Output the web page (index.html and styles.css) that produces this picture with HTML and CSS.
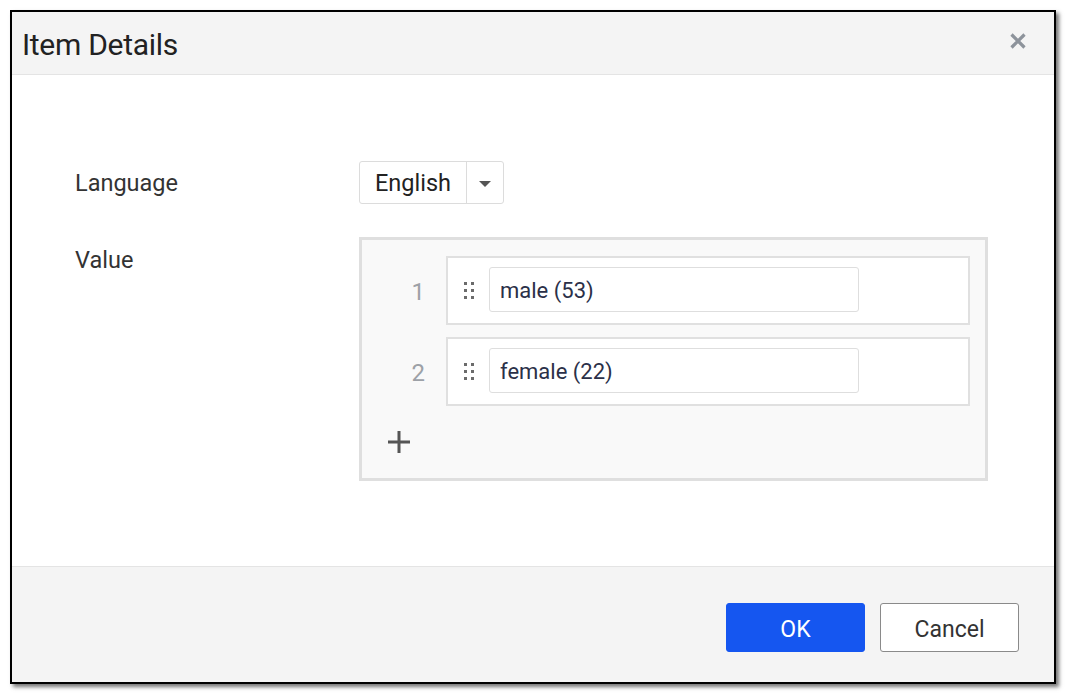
FILE: index.html
```html
<!DOCTYPE html>
<html>
<head>
<meta charset="utf-8">
<link rel="stylesheet" href="styles.css">
</head>
<body>
<div class="dialog">
  <div class="header">
    <div class="title">Item Details</div>
    <svg class="close" width="16" height="16" viewBox="0 0 16 16"><path d="M1.5 1.5 L14.5 14.5 M14.5 1.5 L1.5 14.5" stroke="#8d939b" stroke-width="3.2" stroke-linecap="butt"/></svg>
  </div>
  <div class="body">
    <div class="form">
      <div class="label lang-label">Language</div>
      <div class="select">
        <span class="select-text">English</span>
        <span class="select-caret"><svg width="12" height="6" viewBox="0 0 12 6"><path d="M0 0 L12 0 L6 6 Z" fill="#555"/></svg></span>
      </div>
      <div class="label value-label">Value</div>
      <div class="values">
        <div class="vrow">
          <div class="num">1</div>
          <div class="item">
            <svg class="handle" width="11" height="17" viewBox="0 0 11 17"><g fill="#6b6b6b"><rect x="0" y="0" width="3" height="3"/><rect x="7" y="0" width="3" height="3"/><rect x="0" y="7" width="3" height="3"/><rect x="7" y="7" width="3" height="3"/><rect x="0" y="14" width="3" height="3"/><rect x="7" y="14" width="3" height="3"/></g></svg>
            <div class="input">male (53)</div>
          </div>
        </div>
        <div class="vrow">
          <div class="num">2</div>
          <div class="item">
            <svg class="handle" width="11" height="17" viewBox="0 0 11 17"><g fill="#6b6b6b"><rect x="0" y="0" width="3" height="3"/><rect x="7" y="0" width="3" height="3"/><rect x="0" y="7" width="3" height="3"/><rect x="7" y="7" width="3" height="3"/><rect x="0" y="14" width="3" height="3"/><rect x="7" y="14" width="3" height="3"/></g></svg>
            <div class="input">female (22)</div>
          </div>
        </div>
        <div class="add"><svg width="22" height="22" viewBox="0 0 22 22"><path d="M11 0 V22 M0 11 H22" stroke="#555" stroke-width="3"/></svg></div>
      </div>
    </div>
  </div>
  <div class="footer">
    <button class="btn primary">OK</button>
    <button class="btn">Cancel</button>
  </div>
</div>
</body>
</html>
```
FILE: styles.css
```css
html, body {
  margin: 0;
  padding: 0;
  background: #ffffff;
}
body {
  font-family: Roboto, "Liberation Sans", sans-serif;
  padding: 10px;
  width: 1067px;
  height: 695px;
  box-sizing: border-box;
}
.dialog {
  width: 1046px;
  height: 674px;
  box-sizing: border-box;
  border: 2px solid #000;
  background: #fff;
  box-shadow: 3px 3px 4px rgba(0,0,0,0.55);
  display: flex;
  flex-direction: column;
}
.header {
  height: 62px;
  background: #f4f4f4;
  border-bottom: 1px solid #e4e4e4;
  display: flex;
  align-items: center;
  justify-content: space-between;
  padding: 0 28px 0 10px;
}
.title {
  font-size: 30px;
  color: #222;
  font-weight: 400;
  letter-spacing: -0.3px;
  margin-top: 2px;
}
.close {
  margin-top: -4px;
}
.body {
  flex: 1;
  padding: 86px 0 0 63px;
}
.form {
  display: grid;
  grid-template-columns: 284px 629px;
  row-gap: 33px;
}
.label {
  font-size: 23.5px;
  color: #333;
}
.lang-label {
  align-self: center;
}
.value-label {
  padding-top: 9px;
}
.select {
  width: 145px;
  height: 43px;
  box-sizing: border-box;
  border: 1px solid #dcdcdc;
  border-radius: 3px;
  display: flex;
  align-items: stretch;
}
.select-text {
  width: 107px;
  box-sizing: border-box;
  padding-left: 15px;
  display: flex;
  align-items: center;
  font-size: 23.5px;
  color: #222;
  border-right: 1px solid #dcdcdc;
}
.select-caret {
  flex: 1;
  display: flex;
  align-items: center;
  justify-content: center;
  padding-top: 2px;
}
.values {
  height: 244px;
  box-sizing: border-box;
  border: 3px solid #dfdfdf;
  background: #f9f9f9;
  padding: 16px 15px 0 0;
}
.vrow {
  display: flex;
  margin-bottom: 12px;
}
.num {
  width: 84px;
  box-sizing: border-box;
  text-align: right;
  padding-right: 21px;
  padding-top: 3px;
  font-size: 24px;
  color: #9da1a7;
  display: flex;
  align-items: center;
  justify-content: flex-end;
}
.item {
  flex: 1;
  height: 69px;
  box-sizing: border-box;
  border: 2px solid #e0e0e0;
  background: #fff;
  display: flex;
  align-items: center;
  padding-left: 16px;
}
.handle {
  margin-right: 14px;
}
.input {
  width: 370px;
  height: 45px;
  box-sizing: border-box;
  border: 1px solid #dedede;
  border-radius: 3px;
  padding-left: 10px;
  padding-top: 2px;
  display: flex;
  align-items: center;
  font-size: 22px;
  color: #2b3048;
  margin-top: -2px;
}
.add {
  padding: 13px 0 0 26px;
  height: 22px;
}
.footer {
  height: 116px;
  box-sizing: border-box;
  background: #f4f4f4;
  border-top: 1px solid #e4e4e4;
  display: flex;
  justify-content: flex-end;
  align-items: flex-start;
  gap: 15px;
  padding: 36px 35px 0 0;
}
.btn {
  width: 139px;
  height: 49px;
  box-sizing: border-box;
  border: 1px solid #8a8a8a;
  border-radius: 3px;
  background: #fff;
  font-family: Roboto, "Liberation Sans", sans-serif;
  font-size: 23px;
  color: #333;
  padding: 3px 0 0;
}
.btn.primary {
  background: #1556f0;
  border-color: #1556f0;
  color: #fff;
}
```
